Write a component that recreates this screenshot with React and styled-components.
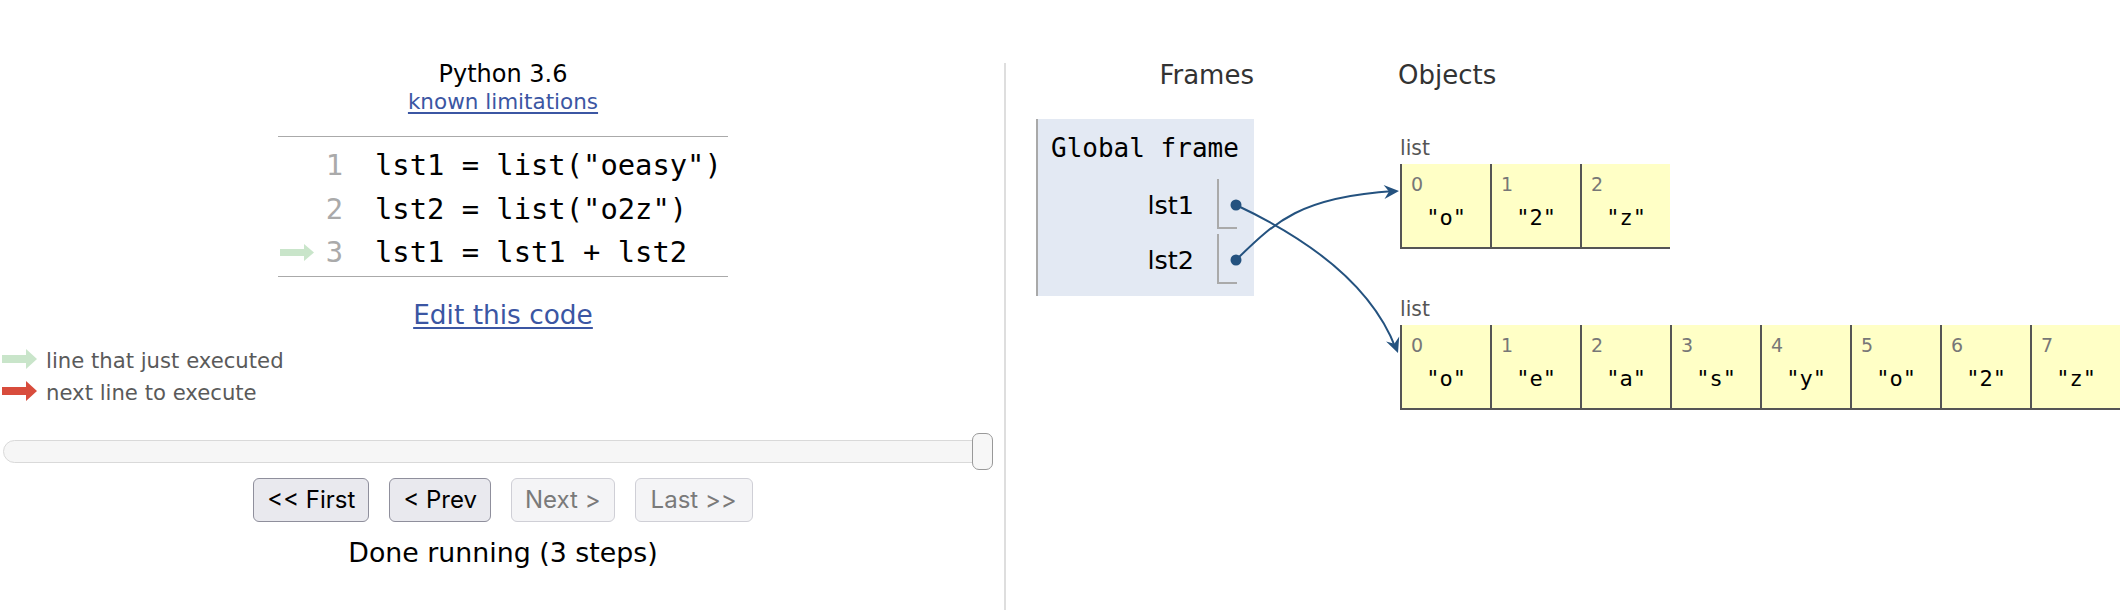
import React from 'react'
import styled, { createGlobalStyle } from 'styled-components'

const GlobalStyle = createGlobalStyle`
    html, body {
        margin: 0;
        padding: 0;
        background: #fff;
    }
    body {
        font-family: "DejaVu Sans", Verdana, sans-serif;
        color: #000;
    }
`;

const Page = styled.div`
    display: flex;
    align-items: stretch;
    box-sizing: border-box;
    height: 610px;
    padding-top: 60px;
    overflow: hidden;
`;

const LeftPanel = styled.div`
    position: relative;
    width: 1006px;
    flex-shrink: 0;
    box-sizing: border-box;
    padding: 0 2px;
    display: flex;
    flex-direction: column;
    align-items: center;

    &::after {
        content: '';
        position: absolute;
        right: 0;
        top: 3px;
        bottom: 0;
        width: 2px;
        background: #dedede;
    }
`;

const Title = styled.div`
    font-size: 24px;
    line-height: 28px;
`;

const Link = styled.a`
    color: #3b56a3;
    text-decoration: underline;
    text-underline-offset: 3px;
    font-size: ${({ size }) => size}px;
    line-height: ${({ lh }) => lh}px;
    margin-top: ${({ top }) => top}px;
    cursor: pointer;
`;

const CodeBlock = styled.div`
    width: 450px;
    margin-top: 22px;
    border-top: 1px solid #aaa;
    border-bottom: 1px solid #aaa;
    padding: 7px 0 1px;
`;

const CodeRow = styled.div`
    display: grid;
    grid-template-columns: 36px 29px 1fr;
    align-items: center;
    height: 43.5px;
    font-family: "DejaVu Sans Mono", Menlo, monospace;
    font-size: 28.8px;
    line-height: 43.5px;
`;

const ArrowCell = styled.div`
    display: flex;
    align-items: center;
    padding-left: 2px;
`;

const LineNo = styled.span`
    color: #aaa;
    text-align: right;
`;

const Code = styled.span`
    padding-left: 32px;
    white-space: pre;
`;

const Legend = styled.div`
    align-self: flex-start;
    margin-top: 15px;
    color: #5a5a5a;
    font-size: 21.2px;
    line-height: 32px;
`;

const LegendRow = styled.div`
    display: flex;
    align-items: center;
    gap: 9px;
    & > svg {
        margin-top: -4px;
    }
`;

const SliderWrap = styled.div`
    align-self: flex-start;
    margin: 24px 0 0 1px;
    width: 990px;
    height: 37px;
    position: relative;
    display: flex;
    align-items: center;
`;

const Track = styled.div`
    width: 984px;
    height: 23px;
    box-sizing: border-box;
    background: #f6f6f6;
    border: 1.5px solid #d9d9d9;
    border-radius: 12px;
`;

const Handle = styled.div`
    position: absolute;
    right: 0;
    top: 0;
    width: 21px;
    height: 37px;
    box-sizing: border-box;
    background: #f7f7f7;
    border: 1.5px solid #999;
    border-radius: 7px;
`;

const ButtonRow = styled.div`
    display: flex;
    gap: 20px;
    margin-top: 8px;
`;

const NavButton = styled.button`
    height: 44px;
    padding: 0 ${({ pad }) => pad}px;
    font-family: Inter, "Liberation Sans", sans-serif;
    font-size: 24px;
    border-radius: 6px;
    border: 1.5px solid ${({ disabled }) => disabled ? '#cfcfd6' : '#8f8f9c'};
    background: ${({ disabled }) => disabled ? '#f4f4f6' : '#e9e9ee'};
    color: ${({ disabled }) => disabled ? '#7a7a7a' : '#000'};
`;

const Status = styled.div`
    margin-top: 15px;
    font-size: 26.8px;
    line-height: 31px;
`;

const RightPanel = styled.div`
    position: relative;
    flex: 1;
    display: flex;
    padding-left: 30px;
`;

const Header = styled.div`
    font-size: 26px;
    line-height: 30px;
    color: #333;
    text-align: ${({ align }) => align};
    margin-left: ${({ shift }) => shift || 0}px;
`;

const StackColumn = styled.div`
    width: 218px;
    display: flex;
    flex-direction: column;
`;

const FrameBox = styled.div`
    margin-top: 29px;
    height: 177px;
    box-sizing: border-box;
    background: #e3e9f3;
    border-left: 2px solid #a9a9a9;
    padding: 14px 17px 12px 13px;
`;

const FrameTitle = styled.div`
    font-family: "DejaVu Sans Mono", Menlo, monospace;
    font-size: 26px;
    line-height: 30px;
    white-space: pre;
`;

const VarGrid = styled.div`
    margin-top: 16px;
    display: grid;
    grid-template-columns: 1fr 20px;
    grid-auto-rows: 50px;
    column-gap: 23px;
    row-gap: 5px;
`;

const VarName = styled.div`
    text-align: right;
    font-size: 25.5px;
    line-height: 48px;
    padding-top: 2px;
`;

const VarSlot = styled.div`
    border-left: 2px solid #aaa;
    border-bottom: 2px solid #aaa;
`;

const HeapColumn = styled.div`
    margin-left: 146px;
    display: flex;
    flex-direction: column;
`;

const HeapObject = styled.div`
    margin-top: ${({ top }) => top}px;
`;

const TypeLabel = styled.div`
    font-size: 20.4px;
    line-height: 24px;
    color: #555;
    margin-bottom: 4px;
`;

const Cells = styled.div`
    display: flex;
`;

const Cell = styled.div`
    width: 90px;
    height: 85px;
    box-sizing: border-box;
    flex-shrink: 0;
    background: #ffffc6;
    border-left: 2px solid #555;
    border-bottom: 2px solid #555;
    padding-top: 10px;
    display: flex;
    flex-direction: column;
`;

const Index = styled.div`
    padding-left: 9px;
    font-size: 19px;
    line-height: 21px;
    color: #777;
`;

const Value = styled.div`
    margin-top: 8px;
    text-align: center;
    font-family: "DejaVu Sans Mono", Menlo, monospace;
    font-size: 22px;
    line-height: 30px;
`;

const Connectors = styled.svg`
    position: absolute;
    left: 0;
    top: 0;
    pointer-events: none;
`;

const Arrow = ({ color }) => (
    <svg width="35" height="20" viewBox="0 0 35 20">
        <polygon points="0,6 24,6 24,0 35,10 24,20 24,14 0,14" fill={color} />
    </svg>
)

const CodeArrow = () => (
    <svg width="34" height="17" viewBox="0 0 34 17">
        <polygon points="0,5 24,5 24,0 34,8.5 24,17 24,12 0,12" fill="#c9e5ca" />
    </svg>
)

// arrow tip polygon, rotated to the end direction of the curve
const headPoints = (x, y, deg) => {
    const a = deg * Math.PI / 180
    const pts = [[0, 0], [-15, -7], [-10, 0], [-15, 7]]
    return pts.map(([px, py]) => {
        const rx = x + px * Math.cos(a) - py * Math.sin(a)
        const ry = y + px * Math.sin(a) + py * Math.cos(a)
        return `${rx.toFixed(1)},${ry.toFixed(1)}`
    }).join(' ')
}

const code = [
    'lst1 = list("oeasy")',
    'lst2 = list("o2z")',
    'lst1 = lst1 + lst2',
]

const list1 = ['o', '2', 'z']
const list2 = ['o', 'e', 'a', 's', 'y', 'o', '2', 'z']

const ListObject = ({ items, top }) => (
    <HeapObject top={top}>
        <TypeLabel>list</TypeLabel>
        <Cells>
            {items.map((v, i) => (
                <Cell key={i}>
                    <Index>{i}</Index>
                    <Value>"{v}"</Value>
                </Cell>
            ))}
        </Cells>
    </HeapObject>
)

const App = () => {
    const blue = '#24527f'
    return (
        <>
            <GlobalStyle />
            <Page>
                <LeftPanel>
                    <Title>Python 3.6</Title>
                    <Link size={21.5} lh={25} top={1}>known limitations</Link>
                    <CodeBlock>
                        {code.map((line, i) => (
                            <CodeRow key={i}>
                                <ArrowCell>{i === 2 && <CodeArrow />}</ArrowCell>
                                <LineNo>{i + 1}</LineNo>
                                <Code>{line}</Code>
                            </CodeRow>
                        ))}
                    </CodeBlock>
                    <Link size={26.4} lh={31} top={22}>Edit this code</Link>
                    <Legend>
                        <LegendRow><Arrow color="#c9e5ca" />line that just executed</LegendRow>
                        <LegendRow><Arrow color="#d84c3c" />next line to execute</LegendRow>
                    </Legend>
                    <SliderWrap>
                        <Track />
                        <Handle />
                    </SliderWrap>
                    <ButtonRow>
                        <NavButton pad={13}>&lt;&lt; First</NavButton>
                        <NavButton pad={13}>&lt; Prev</NavButton>
                        <NavButton pad={13} disabled>Next &gt;</NavButton>
                        <NavButton pad={15} disabled>Last &gt;&gt;</NavButton>
                    </ButtonRow>
                    <Status>Done running (3 steps)</Status>
                </LeftPanel>

                <RightPanel>
                    <StackColumn>
                        <Header align="right">Frames</Header>
                        <FrameBox>
                            <FrameTitle>Global frame</FrameTitle>
                            <VarGrid>
                                <VarName>lst1</VarName>
                                <VarSlot />
                                <VarName>lst2</VarName>
                                <VarSlot />
                            </VarGrid>
                        </FrameBox>
                    </StackColumn>
                    <HeapColumn>
                        <Header align="left" shift={-2}>Objects</Header>
                        <ListObject items={list1} top={46} />
                        <ListObject items={list2} top={48} />
                    </HeapColumn>

                    <Connectors width="1114" height="550" viewBox="1006 60 1114 550">
                        <path d="M1236 205 C1300 235, 1370 280, 1396 349" stroke={blue} strokeWidth="2" fill="none" />
                        <path d="M1236 260 C1275 222, 1300 197, 1394 191" stroke={blue} strokeWidth="2" fill="none" />
                        <polygon points={headPoints(1398, 353, 69)} fill={blue} />
                        <polygon points={headPoints(1399, 191, -3.5)} fill={blue} />
                        <circle cx="1236" cy="205" r="5.5" fill={blue} />
                        <circle cx="1236" cy="260" r="5.5" fill={blue} />
                    </Connectors>
                </RightPanel>
            </Page>
        </>
    )
}

export default App
